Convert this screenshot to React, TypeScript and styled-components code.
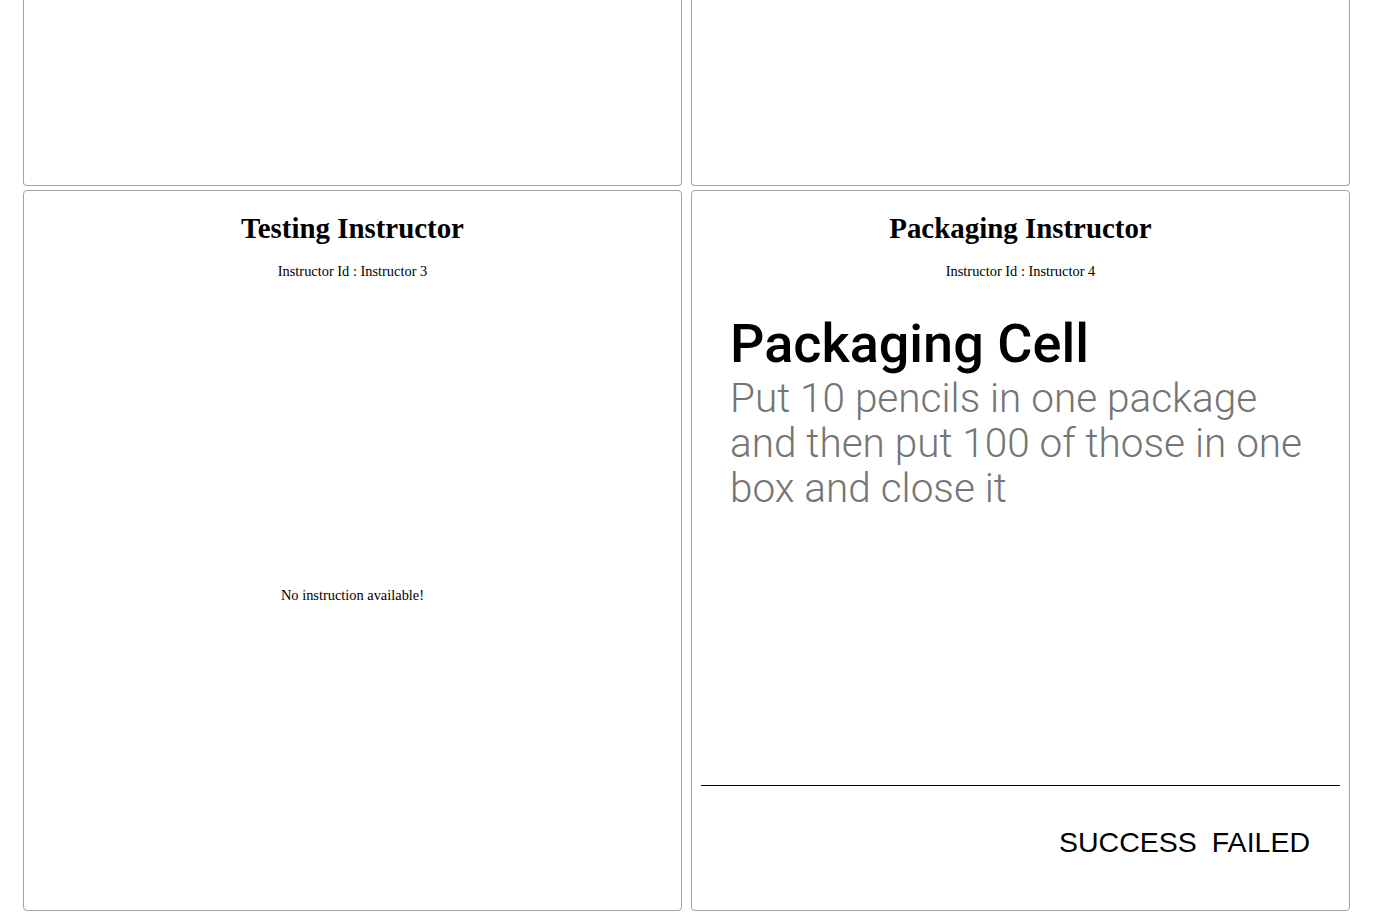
import React from "react";
import styled, { createGlobalStyle } from "styled-components";

const Global = createGlobalStyle`
  html, body { margin: 0; padding: 0; background: #ffffff; }
  body { font-family: "Liberation Serif", "Times New Roman", serif; color: #000; }
`;

const Page = styled.div`
  padding: 0 46px 0 23px;
  display: grid;
  grid-template-columns: 659px 659px;
  grid-template-rows: 186px 721px;
  column-gap: 9px;
  row-gap: 4px;
`;

const Card = styled.section<{ $cut?: boolean }>`
  box-sizing: border-box;
  border: 1px solid #a3a3a3;
  border-radius: 4px;
  background: #fff;
  display: flex;
  flex-direction: column;
  ${(p) =>
    p.$cut
      ? `border-top: none; border-top-left-radius: 0; border-top-right-radius: 0;`
      : ``}
`;

const Header = styled.header`
  padding-top: 20px;
  text-align: center;
`;

const Title = styled.h2`
  margin: 0;
  font-family: "Liberation Serif", "Times New Roman", serif;
  font-weight: 700;
  font-size: 28.9px;
  line-height: 34px;
`;

const SubId = styled.div`
  margin-top: 17px;
  font-size: 14.4px;
  line-height: 18px;
`;

const Empty = styled.div`
  flex: 1;
  display: flex;
  align-items: center;
  justify-content: center;
  font-size: 14.4px;
  line-height: 18px;
`;

const Body = styled.div`
  flex: 1;
  padding: 32px 40px 0 38px;
  font-family: Roboto, "Noto Sans", sans-serif;
`;

const CellName = styled.h1`
  margin: 0;
  font-family: Roboto, sans-serif;
  font-weight: 500;
  font-size: 54px;
  line-height: 64px;
  color: #000;
`;

const Instruction = styled.p`
  margin: 0;
  font-family: Roboto, sans-serif;
  font-weight: 300;
  font-size: 40.5px;
  line-height: 45px;
  color: #757575;
`;

const Divider = styled.hr`
  margin: 0 9px;
  border: none;
  border-top: 1px solid #000;
  height: 0;
`;

const Footer = styled.footer`
  height: 124px;
  box-sizing: border-box;
  padding: 40px 39px 0 0;
  display: flex;
  justify-content: flex-end;
  align-items: flex-start;
  gap: 15px;
`;

const ActionButton = styled.button`
  border: none;
  background: transparent;
  padding: 0;
  margin: 0;
  font-family: "Liberation Sans", Arial, sans-serif;
  font-size: 28.5px;
  line-height: 32px;
  color: #000;
  cursor: pointer;
`;

export default function App() {
  return (
    <>
      <Global />
      <Page>
        <Card $cut />
        <Card $cut />
        <Card>
          <Header>
            <Title>Testing Instructor</Title>
            <SubId>Instructor Id : Instructor 3</SubId>
          </Header>
          <Empty>No instruction available!</Empty>
        </Card>
        <Card>
          <Header>
            <Title>Packaging Instructor</Title>
            <SubId>Instructor Id : Instructor 4</SubId>
          </Header>
          <Body>
            <CellName>Packaging Cell</CellName>
            <Instruction>
              Put 10 pencils in one package and then put 100 of those in one box and close it
            </Instruction>
          </Body>
          <Divider />
          <Footer>
            <ActionButton>SUCCESS</ActionButton>
            <ActionButton>FAILED</ActionButton>
          </Footer>
        </Card>
      </Page>
    </>
  );
}
